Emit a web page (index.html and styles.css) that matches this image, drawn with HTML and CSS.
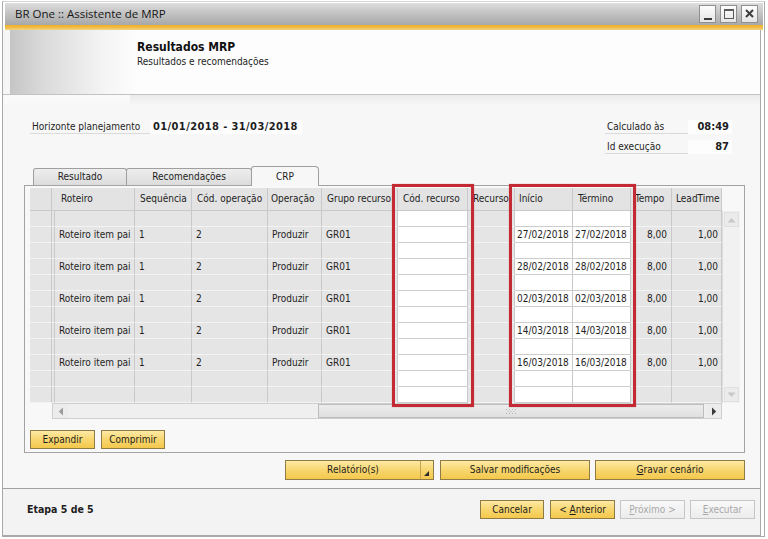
FILE: index.html
```html
<!DOCTYPE html>
<html lang="pt">
<head>
<meta charset="utf-8">
<title>BR One :: Assistente de MRP</title>
<link rel="stylesheet" href="styles.css">
</head>
<body>
<div class="win">
 <div class="frame">
  <div class="titlebar">
   <span class="title">BR One :: Assistente de MRP</span>
   <div class="wbtns">
    <span class="wbtn"><svg width="15" height="16" viewBox="0 0 15 16"><rect x="4" y="12" width="8" height="2" fill="#3a3a3a"/></svg></span>
    <span class="wbtn"><svg width="15" height="16" viewBox="0 0 15 16"><rect x="3.5" y="3.5" width="9" height="9" fill="none" stroke="#5a5a5a"/><rect x="3" y="3" width="10" height="2" fill="#5a5a5a"/></svg></span>
    <span class="wbtn"><svg width="15" height="16" viewBox="0 0 15 16"><path d="M4 4 L11 11 M11 4 L4 11" stroke="#3c3c3c" stroke-width="2"/></svg></span>
   </div>
  </div>
  <div class="client">
   <div class="hdr">
    <div class="hdr-title">Resultados MRP</div>
    <div class="hdr-sub">Resultados e recomendações</div>
   </div>
   <div class="main">
    <div class="info">
     <div class="info-left">
      <div class="field"><span class="lbl lbl-h">Horizonte planejamento</span><span class="val val-h">01/01/2018 - 31/03/2018</span></div>
     </div>
     <div class="info-right">
      <div class="field"><span class="lbl lbl-r">Calculado às</span><span class="val val-r">08:49</span></div>
      <div class="field"><span class="lbl lbl-r">Id execução</span><span class="val val-r">87</span></div>
     </div>
    </div>
    <div class="tabs">
     <span class="tab t1">Resultado</span><span class="tab t2">Recomendações</span><span class="tab t3 active">CRP</span>
    </div>
    <div class="panel">
     <div class="grid">
      <div class="row head"><span></span><span></span><span>Roteiro</span><span>Sequência</span><span>Cód. operação</span><span>Operação</span><span>Grupo recurso</span><span>Cód. recurso</span><span>Recurso</span><span>Início</span><span>Término</span><span>Tempo</span><span>LeadTime</span></div>
      <div class="corner"></div>
      <div class="rows">
       <div class="row"><span></span><span></span><span></span><span></span><span></span><span></span><span></span><span></span><span></span><span></span><span></span><span></span><span></span></div>
       <div class="row"><span></span><span></span><span>Roteiro item pai</span><span>1</span><span>2</span><span>Produzir</span><span>GR01</span><span></span><span></span><span>27/02/2018</span><span>27/02/2018</span><span>8,00</span><span>1,00</span></div>
       <div class="row"><span></span><span></span><span></span><span></span><span></span><span></span><span></span><span></span><span></span><span></span><span></span><span></span><span></span></div>
       <div class="row"><span></span><span></span><span>Roteiro item pai</span><span>1</span><span>2</span><span>Produzir</span><span>GR01</span><span></span><span></span><span>28/02/2018</span><span>28/02/2018</span><span>8,00</span><span>1,00</span></div>
       <div class="row"><span></span><span></span><span></span><span></span><span></span><span></span><span></span><span></span><span></span><span></span><span></span><span></span><span></span></div>
       <div class="row"><span></span><span></span><span>Roteiro item pai</span><span>1</span><span>2</span><span>Produzir</span><span>GR01</span><span></span><span></span><span>02/03/2018</span><span>02/03/2018</span><span>8,00</span><span>1,00</span></div>
       <div class="row"><span></span><span></span><span></span><span></span><span></span><span></span><span></span><span></span><span></span><span></span><span></span><span></span><span></span></div>
       <div class="row"><span></span><span></span><span>Roteiro item pai</span><span>1</span><span>2</span><span>Produzir</span><span>GR01</span><span></span><span></span><span>14/03/2018</span><span>14/03/2018</span><span>8,00</span><span>1,00</span></div>
       <div class="row"><span></span><span></span><span></span><span></span><span></span><span></span><span></span><span></span><span></span><span></span><span></span><span></span><span></span></div>
       <div class="row"><span></span><span></span><span>Roteiro item pai</span><span>1</span><span>2</span><span>Produzir</span><span>GR01</span><span></span><span></span><span>16/03/2018</span><span>16/03/2018</span><span>8,00</span><span>1,00</span></div>
       <div class="row"><span></span><span></span><span></span><span></span><span></span><span></span><span></span><span></span><span></span><span></span><span></span><span></span><span></span></div>
       <div class="row"><span></span><span></span><span></span><span></span><span></span><span></span><span></span><span></span><span></span><span></span><span></span><span></span><span></span></div>
      </div>
      <div class="vscroll">
       <span class="varr"><svg width="9" height="6" viewBox="0 0 9 6"><path d="M0.5 5.5 L4.5 1 L8.5 5.5Z" fill="#c8c8c8"/></svg></span>
       <span class="varr"><svg width="9" height="6" viewBox="0 0 9 6"><path d="M0.5 0.5 L4.5 5 L8.5 0.5Z" fill="#c8c8c8"/></svg></span>
      </div>
      <div class="hs-row">
       <div class="hs-blank"></div>
       <div class="hscroll">
        <span class="harr"><svg width="6" height="9" viewBox="0 0 6 9"><path d="M5 0.5 L0.8 4.5 L5 8.5Z" fill="#9a9a9a"/></svg></span>
        <div class="track"><div class="thumb"><svg width="11" height="5" viewBox="0 0 11 5"><g fill="#b4b4b4"><rect x="0" y="0" width="1" height="1"/><rect x="3" y="0" width="1" height="1"/><rect x="6" y="0" width="1" height="1"/><rect x="9" y="0" width="1" height="1"/><rect x="1.5" y="2" width="1" height="1"/><rect x="4.5" y="2" width="1" height="1"/><rect x="7.5" y="2" width="1" height="1"/><rect x="0" y="4" width="1" height="1"/><rect x="3" y="4" width="1" height="1"/><rect x="6" y="4" width="1" height="1"/><rect x="9" y="4" width="1" height="1"/></g></svg></div></div>
        <span class="harr"><svg width="6" height="9" viewBox="0 0 6 9"><path d="M1 0.5 L5.2 4.5 L1 8.5Z" fill="#3a3a3a"/></svg></span>
       </div>
      </div>
      <div class="hs-corner"></div>
      <div class="hl hl1"></div>
      <div class="hl hl2"></div>
     </div>
     <div class="panel-btns">
      <button class="btn b-exp">Expandir</button>
      <button class="btn b-comp">Comprimir</button>
     </div>
    </div>
    <div class="actions">
     <button class="btn split b-rel"><span class="split-lbl">Relatório(s)</span><span class="split-dd"><svg width="5" height="5" viewBox="0 0 5 5"><path d="M5 0 L5 5 L0 5Z" fill="#2a2a2a"/></svg></span></button>
     <button class="btn b-act">Salvar modificações</button>
     <button class="btn b-act"><u>G</u>ravar cenário</button>
    </div>
   </div>
   <div class="footer">
    <span class="step">Etapa 5 de 5</span>
    <div class="nav">
     <button class="btn b-nav b-cancel">Cancelar</button>
     <button class="btn b-nav">&lt; <u>A</u>nterior</button>
     <button class="btn b-nav dis"><u>P</u>róximo &gt;</button>
     <button class="btn b-nav dis"><u>E</u>xecutar</button>
    </div>
   </div>
  </div>
 </div>
</div>
</body>
</html>
```
FILE: styles.css
```css
*{box-sizing:border-box;margin:0;padding:0}
html,body{width:768px;height:539px;overflow:hidden}
body{background:#fff;font-family:"DejaVu Sans Condensed","DejaVu Sans",sans-serif;font-size:10px;color:#1e1e1e}
button{font:inherit;color:inherit;cursor:default}

.win{width:768px;height:539px;padding:1px 3px 2px 2px}
.frame{height:100%;border:1px solid #a9a9a9;border-top-color:#d4d4d4;display:flex;flex-direction:column;background:#fff}

.titlebar{flex:none;margin:1px 1px 0 2px;height:27px;display:flex;justify-content:space-between;align-items:flex-start;
  background:linear-gradient(#dedede 0,#c6c6c6 9px,#a8a8a8 22px,#eeae28 22px,#f1c04f 25px,#f5d48a 27px)}
.title{font-family:"Open Sans",sans-serif;font-size:11.5px;line-height:22px;padding-left:10px;color:#161616}
.wbtns{display:flex;gap:4px;padding:2px 5px 0 0}
.wbtn{width:17px;height:18px;border:1px solid #8f8f8f;background:linear-gradient(#fdfdfd,#e4e4e4);display:flex}

.client{flex:1;margin-right:3px;border-right:1px solid #a9a9a9;border-bottom:1px solid #a9a9a9;display:flex;flex-direction:column}

.hdr{flex:none;height:65px;border-bottom:1px solid #c3c3c3;padding:9px 0 0 134px;
  background:linear-gradient(to right,#f6f6f6 0,#f6f6f6 7px,#c5c5c5 7px,#dadada 40px,#f4f4f4 100px,#fdfdfd 135px)}
.hdr-title{font-weight:bold;font-size:12px;line-height:16px;color:#111}
.hdr-sub{font-size:10px;line-height:13px}

.main{flex:1;padding:0 15px 0 21px;
  background:linear-gradient(#fafafa,#f8f8f8) 0 0/127px 10px no-repeat,linear-gradient(#ebebeb 0,#f7f7f7 10px) #f7f7f7}

.info{display:flex;justify-content:space-between;padding-top:25px;height:69px}
.info-left{padding-left:6px}
.info-right{padding-right:13px;display:flex;flex-direction:column;gap:6px}
.field{display:flex;height:14px;line-height:13px}
.lbl{border-bottom:1px solid #dadada;padding-left:2px}
.lbl-h{width:120px}
.lbl-r{width:83px}
.val{font-weight:bold;font-size:11px;background:#fdfdfd;padding-left:3px}
.val-h{width:152px;letter-spacing:0.4px}
.val-r{width:44px;text-align:right;padding-right:3px}

.tabs{display:flex;align-items:flex-end;height:21px;padding-left:9px;position:relative;z-index:1}
.tab{height:17px;line-height:16px;text-align:center;border:1px solid #9f9f9f;border-bottom:none;border-radius:3px 3px 0 0;
  background:linear-gradient(#eeeeee,#dcdcdc)}
.t1{width:94px}
.t2{width:126px;margin-left:-1px}
.t3{width:68px;margin-left:-1px}
.tab.active{height:20px;line-height:19px;background:#f7f7f7;margin-bottom:-1px;border-radius:3px 4px 0 0}

.panel{border:1px solid #a3a3a3;background:#f8f8f8;padding:2px 4px 3px 5px}

.grid{position:relative;display:grid;grid-template-columns:692px 18px;grid-template-rows:23px 192px 16px}
.row{display:grid;grid-template-columns:22px 3px 80px 57px 76px 54px 76px 70px 47px 58px 58px 41px 50px;height:16px}
.row>span{background:#e5e5e5;border-right:1px solid #c9c9c9;border-bottom:1px solid #f3f3f3;white-space:nowrap;overflow:hidden;padding-left:4px;line-height:15px}
.row>span:nth-child(8),.row>span:nth-child(10),.row>span:nth-child(11){background:#fff;border-bottom-color:#cdcdcd}
.row>span:nth-child(10),.row>span:nth-child(11){padding-left:2px}
.row>span:nth-child(12),.row>span:nth-child(13){text-align:right;padding-left:0;padding-right:4px}
.row>span:nth-child(13){padding-right:3px}
.row>span:nth-child(1),.row>span:nth-child(2){padding:0}
.row.head{height:23px}
.row.head>span{background:#e3e3e3;border-bottom:1px solid #c9c9c9;line-height:22px;padding-left:5px;text-align:left;padding-right:0;text-overflow:clip}
.row.head>span:nth-child(3){padding-left:6px}
.row.head>span:nth-child(6){padding-left:3px}
.row.head>span:nth-child(10){padding-left:4px}
.row.head>span:nth-child(11){padding-left:5px}
.row.head>span:nth-child(12),.row.head>span:nth-child(13){padding-left:4px}
.corner{background:#f8f8f8}
.rows{display:flex;flex-direction:column}

.vscroll{background:#f1f1f1;border-left:1px solid #dcdcdc;display:flex;flex-direction:column;justify-content:space-between;padding:1px}
.varr{height:15px;background:#ebebeb;border:1px solid #e0e0e0;display:flex;align-items:center;justify-content:center}

.hs-row{display:flex}
.hs-blank{width:22px;background:#f8f8f8}
.hscroll{flex:1;display:flex;background:#efefef;border:1px solid #cfcfcf}
.harr{width:15px;display:flex;align-items:center;justify-content:center;background:#ececec}
.track{flex:1;display:flex}
.thumb{margin-left:250px;width:386px;background:linear-gradient(#ececec,#e0e0e0);border:1px solid #bdbdbd;display:flex;align-items:center;justify-content:center}
.hs-corner{background:#f8f8f8}

.hl{position:absolute;top:-4px;height:223px;border:3px solid #c42a33;box-shadow:0 0 1px rgba(196,42,51,.5)}
.hl1{left:362px;width:82px}
.hl2{left:479px;width:127px}

.panel-btns{display:flex;gap:6px;margin-top:11px}
.btn{height:19px;border:1px solid #8e7b45;background:linear-gradient(#fdeaa6 0,#f8d874 45%,#f4c84c 100%);text-align:center;line-height:17px;padding:0}
.b-exp{width:65px}
.b-comp{width:64px}

.actions{display:flex;justify-content:flex-end;gap:5px;margin-top:7px}
.actions .btn{height:20px;line-height:18px}
.b-act{width:150px}
.b-rel{width:149px;display:flex;margin-right:1px}
.split-lbl{flex:1;text-align:center}
.split-dd{width:13px;border-left:1px solid #c6a651;display:flex;align-items:flex-end;justify-content:flex-start;padding:0 0 3px 3px}

.footer{flex:none;height:47px;border-top:1px solid #a0a0a0;background:#f3f3f3;display:flex;align-items:flex-start;justify-content:space-between;padding:11px 5px 0 24px}
.step{font-weight:bold;line-height:18px;font-size:10.5px}
.nav{display:flex;gap:5px}
.b-nav{width:65px}
.b-cancel{width:64px;margin-right:1px}
.btn.dis{background:linear-gradient(#f9f9f9,#ececec);border-color:#c6c6c6;color:#a9a9a9}
```
